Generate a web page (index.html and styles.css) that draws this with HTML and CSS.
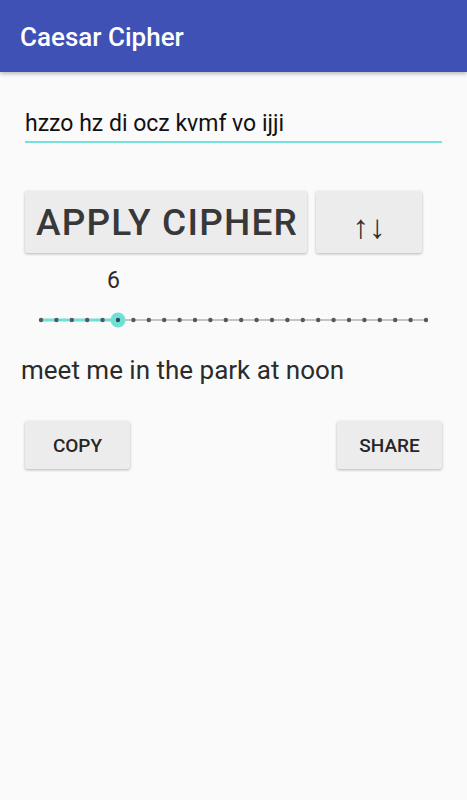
FILE: index.html
```html
<!DOCTYPE html>
<html>
  <head>
    <meta charset="UTF-8" />
    <title>Caesar Cipher</title>
    <link rel="stylesheet" href="styles.css">
  </head>
  <body>
    <!-- App bar -->
    <header class="app-bar">
      <h1 class="app-title">Caesar Cipher</h1>
    </header>

    <main class="content">
      <!-- Cipher text input -->
      <div class="field">hzzo hz di ocz kvmf vo ijji</div>

      <div class="action-row">
        <button class="btn btn-apply">APPLY CIPHER</button>
        <button class="btn btn-swap">↑↓</button>
      </div>

      <!-- Shift seek bar -->
      <div class="shift-value">6</div>
      <div class="slider">
        <svg width="417" height="24" viewBox="0 0 417 24">
          <line x1="16" y1="12" x2="401" y2="12" stroke="#c4c4c4" stroke-width="2" />
          <line x1="16" y1="12" x2="93" y2="12" stroke="#6fe0d6" stroke-width="3" />
          <g fill="#575757">
            <circle cx="16" cy="12" r="2.2" />
            <circle cx="31.4" cy="12" r="2.2" />
            <circle cx="46.8" cy="12" r="2.2" />
            <circle cx="62.2" cy="12" r="2.2" />
            <circle cx="77.6" cy="12" r="2.2" />
            <circle cx="108.4" cy="12" r="2.2" />
            <circle cx="123.8" cy="12" r="2.2" />
            <circle cx="139.2" cy="12" r="2.2" />
            <circle cx="154.6" cy="12" r="2.2" />
            <circle cx="170" cy="12" r="2.2" />
            <circle cx="185.4" cy="12" r="2.2" />
            <circle cx="200.8" cy="12" r="2.2" />
            <circle cx="216.2" cy="12" r="2.2" />
            <circle cx="231.6" cy="12" r="2.2" />
            <circle cx="247" cy="12" r="2.2" />
            <circle cx="262.4" cy="12" r="2.2" />
            <circle cx="277.8" cy="12" r="2.2" />
            <circle cx="293.2" cy="12" r="2.2" />
            <circle cx="308.6" cy="12" r="2.2" />
            <circle cx="324" cy="12" r="2.2" />
            <circle cx="339.4" cy="12" r="2.2" />
            <circle cx="354.8" cy="12" r="2.2" />
            <circle cx="370.2" cy="12" r="2.2" />
            <circle cx="385.6" cy="12" r="2.2" />
            <circle cx="401" cy="12" r="2.2" />
          </g>
          <circle cx="93" cy="12" r="7.5" fill="#6fe0d6" />
          <circle cx="93" cy="12" r="2.2" fill="#2f4f4c" />
        </svg>
      </div>

      <!-- Decoded output -->
      <p class="output">meet me in the park at noon</p>

      <div class="share-row">
        <button class="btn btn-small">COPY</button>
        <button class="btn btn-small">SHARE</button>
      </div>
    </main>
  </body>
</html>
```

FILE: styles.css
```css
body {
  font-family: Roboto, "Noto Sans", sans-serif;
  margin: 0;
  padding: 0;
  background-color: #fafafa;
  color: #333;
  width: 467px;
  height: 800px;
  overflow: hidden;
}

.app-bar {
  background-color: #3f51b5;
  height: 72px;
  display: flex;
  align-items: center;
  padding-left: 20px;
  box-shadow: 0 2px 4px rgba(0, 0, 0, 0.25);
}

.app-title {
  margin: 0;
  color: white;
  font-size: 26px;
  font-weight: 500;
  padding-top: 2px;
}

.content {
  padding: 0 25px;
}

.field {
  margin-top: 38px;
  font-size: 23px;
  line-height: 28px;
  padding-bottom: 3px;
  color: #111;
  border-bottom: 2px solid #73e2da;
}

.action-row {
  display: flex;
  gap: 9px;
  margin-top: 48px;
}

.btn {
  font-family: Roboto, "Noto Sans", sans-serif;
  background-color: #ececec;
  border: none;
  border-radius: 2px;
  box-shadow: 0 1px 3px rgba(0, 0, 0, 0.28);
  color: #383838;
  padding: 0;
}

.btn-apply {
  width: 282px;
  height: 62px;
  font-size: 37px;
  font-weight: 500;
  letter-spacing: 1.2px;
  padding-left: 2px;
}

.btn-swap {
  width: 106px;
  height: 62px;
  font-size: 33px;
  padding-top: 8px;
  color: #2f2f2f;
}

.shift-value {
  margin-top: 15px;
  padding-left: 82px;
  font-size: 23px;
  line-height: 26px;
  color: #2a2a2a;
}

.slider {
  margin-top: 14px;
  height: 24px;
}

.slider svg {
  display: block;
}

.output {
  margin: 22px 0 0 -4px;
  font-size: 26px;
  line-height: 32px;
  color: #2b2b2b;
}

.share-row {
  display: flex;
  justify-content: space-between;
  margin-top: 35px;
}

.btn-small {
  width: 105px;
  height: 48px;
  font-size: 19px;
  font-weight: 500;
  color: #262626;
}
```
